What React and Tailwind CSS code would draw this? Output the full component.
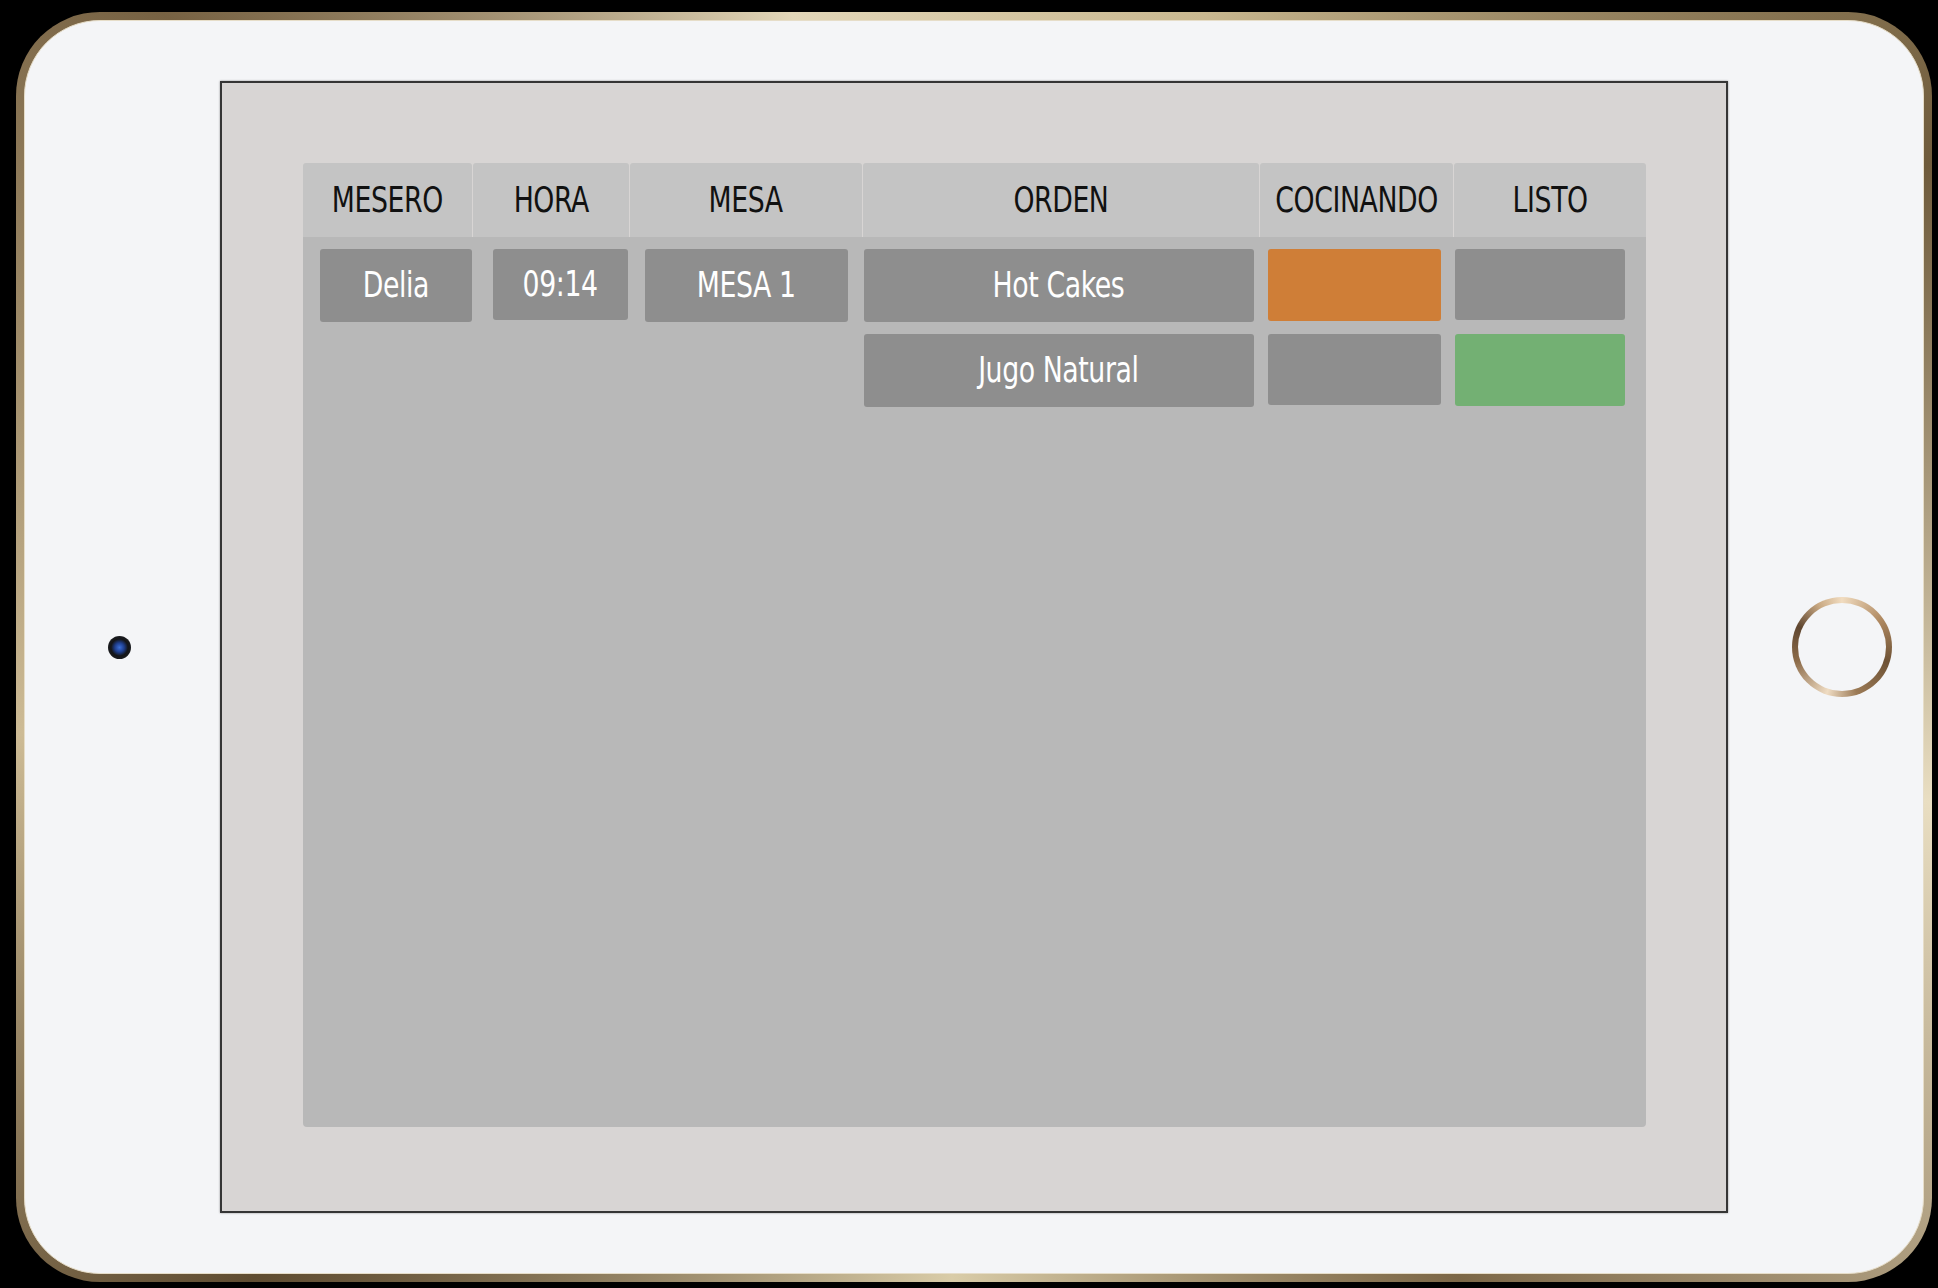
import React from 'react';

const font = "font-['Liberation_Sans_Narrow','DejaVu_Sans_Condensed','Roboto_Condensed',sans-serif] font-stretch-condensed";

const headers = [
  { label: 'MESERO', w: 'w-[169px]' },
  { label: 'HORA', w: 'w-[156px]' },
  { label: 'MESA', w: 'w-[232px]' },
  { label: 'ORDEN', w: 'w-[396px]' },
  { label: 'COCINANDO', w: 'w-[193px]' },
  { label: 'LISTO', w: 'w-[192px]' },
];

// condensed label, the original typeface is narrower than what we have
const Label = ({ children }) => (
  <span className="inline-block scale-x-[0.85] whitespace-nowrap">{children}</span>
);

const Cell = ({ className = '', children }) => (
  <div className={`flex items-center justify-center rounded-[3px] text-white text-[35px] tracking-[-0.5px] ${className}`}>
    {children && <Label>{children}</Label>}
  </div>
);

const App = () => {
  return (
    <div className={`w-[1938px] h-[1288px] bg-black pt-[12px] pl-[16px] ${font}`}>
      {/* device frame */}
      <div className="w-[1916px] h-[1270px] rounded-[84px] p-[8px] bg-[conic-gradient(from_20deg,#c9b890,#6f5b3b_12%,#e9dec2_22%,#7c6747_34%,#d9cca8_45%,#5f4c31_58%,#cdbb95_68%,#776243_80%,#e2d6b8_90%,#c9b890)]">
        <div className="w-full h-full rounded-[76px] bg-[#f4f5f7] border border-[#e6ddc8] flex items-center">
          {/* camera */}
          <div className="w-[195px] flex justify-center pr-[5px]">
            <div className="w-[23px] h-[23px] rounded-full bg-[radial-gradient(circle,#3d6fd6_0%,#1f3f8f_28%,#141518_52%,#23252a_100%)]" />
          </div>

          {/* screen */}
          <div className="w-[1510px] h-[1132px] border-2 border-[#353535] bg-[#d8d5d4] pl-[81px] pt-[80px] shadow-[0_0_2px_rgba(0,0,0,0.4)]">
            <div className="w-[1343px]">
              <div className="flex gap-[1px] h-[74px]">
                {headers.map((h) => (
                  <div
                    key={h.label}
                    className={`${h.w} bg-[#c4c4c4] rounded-t-[3px] flex items-center justify-center text-[#111] text-[35px] tracking-[-0.5px]`}
                  >
                    <Label>{h.label}</Label>
                  </div>
                ))}
              </div>

              <div className="h-[890px] bg-[#b8b8b8] rounded-b-[4px] pt-[12px] pl-[17px] flex flex-col gap-[12px]">
                <div className="flex items-start">
                  <Cell className="w-[152px] h-[73px] bg-[#8e8e8e]">Delia</Cell>
                  <Cell className="ml-[21px] w-[135px] h-[71px] bg-[#8e8e8e]">09:14</Cell>
                  <Cell className="ml-[17px] w-[203px] h-[73px] bg-[#8e8e8e]">MESA 1</Cell>
                  <Cell className="ml-[16px] w-[390px] h-[73px] bg-[#8e8e8e]">Hot Cakes</Cell>
                  <Cell className="ml-[14px] w-[173px] h-[72px] bg-[#cf7e37]" />
                  <Cell className="ml-[14px] w-[170px] h-[71px] bg-[#8e8e8e]" />
                </div>
                <div className="flex items-start">
                  <div className="w-[544px] shrink-0" />
                  <Cell className="w-[390px] h-[73px] bg-[#8e8e8e]">Jugo Natural</Cell>
                  <Cell className="ml-[14px] w-[173px] h-[71px] bg-[#8e8e8e]" />
                  <Cell className="ml-[14px] w-[170px] h-[72px] bg-[#73b073]" />
                </div>
              </div>
            </div>
          </div>

          {/* home button */}
          <div className="w-[195px] pl-[64px] flex items-center">
            <div className="w-[100px] h-[100px] rounded-full p-[6px] bg-[conic-gradient(from_0deg,#f1dcc0,#b08a62_15%,#6e5235_30%,#9b7a56_45%,#efdcc3_55%,#8d6c4a_70%,#5f4630_82%,#c9a983_92%,#f1dcc0)]">
              <div className="w-full h-full rounded-full bg-[#f4f5f7]" />
            </div>
          </div>
        </div>
      </div>
    </div>
  );
};

export default App;
